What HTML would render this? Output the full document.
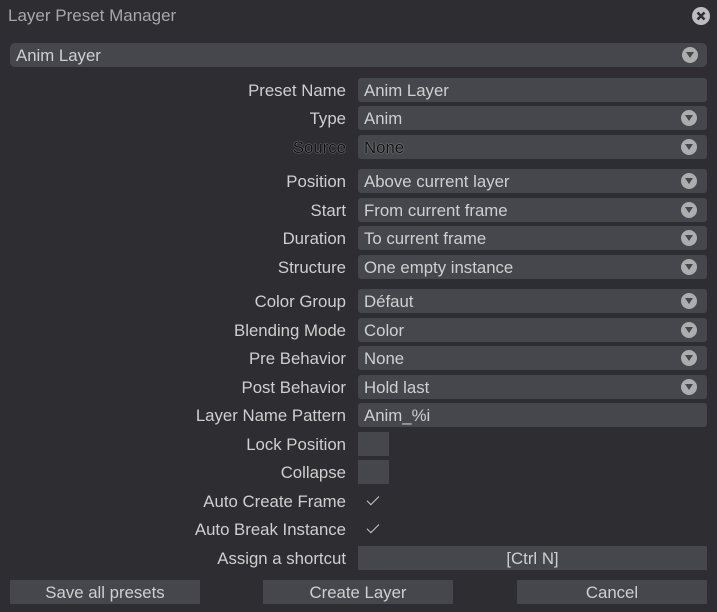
<!DOCTYPE html>
<html><head><meta charset="utf-8"><style>
body{margin:0;width:717px;height:612px;background:#2d2d32;font-family:"Liberation Sans",sans-serif;font-size:16.8px;color:#cfcfcf;position:relative;overflow:hidden}
.a{position:absolute}
.f{position:absolute;left:358px;width:349px;height:24px;background:#46474c;border-radius:3px;line-height:26px;padding-left:6px;box-sizing:border-box}
.l{position:absolute;right:371px;height:24px;line-height:26px;text-align:right;white-space:nowrap}
.dd{position:absolute;right:10px;top:4px;width:16px;height:16px;border-radius:50%;background:#adadaf}
.dd:after{content:"";position:absolute;left:3.5px;top:5px;border-left:4.5px solid transparent;border-right:4.5px solid transparent;border-top:6px solid #46474c}
.cb{position:absolute;left:358px;width:31px;height:24px;background:#46474c}
.ck{position:absolute;left:367px;width:11px;height:5px;border-left:1.6px solid #c8c8c8;border-bottom:1.6px solid #c8c8c8;transform:rotate(-45deg)}
.b{position:absolute;top:580px;height:24px;width:190px;background:#46474c;text-align:center;line-height:26px}
.dk{color:#0e0e10;text-shadow:0 0 1px #aaa,0 0 1px #aaa}
</style></head><body>
<div class="a" style="left:8px;top:6px;color:#a8a8aa;font-size:17px">Layer Preset Manager</div>
<div class="a" style="left:692px;top:7px;width:18px;height:18px;border-radius:50%;background:#bdbdbf">
<svg width="18" height="18" style="position:absolute;left:0;top:0"><path d="M5.5 5.5L12.5 12.5M12.5 5.5L5.5 12.5" stroke="#2d2d32" stroke-width="2.6"/></svg></div>
<div class="f" style="left:10px;width:697px;top:43px;border-radius:5px">Anim Layer<div class="dd" style="right:9px"></div></div>

<div class="l" style="top:78px">Preset Name</div><div class="f" style="top:78px">Anim Layer</div>
<div class="l" style="top:106px">Type</div><div class="f" style="top:106px">Anim<div class="dd"></div></div>
<div class="l dk" style="top:135px">Source</div><div class="f dk" style="top:135px">None<div class="dd"></div></div>
<div class="l" style="top:169px">Position</div><div class="f" style="top:169px">Above current layer<div class="dd"></div></div>
<div class="l" style="top:198px">Start</div><div class="f" style="top:198px">From current frame<div class="dd"></div></div>
<div class="l" style="top:226px">Duration</div><div class="f" style="top:226px">To current frame<div class="dd"></div></div>
<div class="l" style="top:255px">Structure</div><div class="f" style="top:255px">One empty instance<div class="dd"></div></div>
<div class="l" style="top:289px">Color Group</div><div class="f" style="top:289px">Défaut<div class="dd"></div></div>
<div class="l" style="top:318px">Blending Mode</div><div class="f" style="top:318px">Color<div class="dd"></div></div>
<div class="l" style="top:346px">Pre Behavior</div><div class="f" style="top:346px">None<div class="dd"></div></div>
<div class="l" style="top:375px">Post Behavior</div><div class="f" style="top:375px">Hold last<div class="dd"></div></div>
<div class="l" style="top:403px">Layer Name Pattern</div><div class="f" style="top:403px">Anim_%i</div>
<div class="l" style="top:432px">Lock Position</div><div class="cb" style="top:432px"></div>
<div class="l" style="top:460px">Collapse</div><div class="cb" style="top:460px"></div>
<div class="l" style="top:489px">Auto Create Frame</div><div class="ck" style="top:496px"></div>
<div class="l" style="top:517px">Auto Break Instance</div><div class="ck" style="top:524px"></div>
<div class="l" style="top:546px">Assign a shortcut</div><div class="f" style="top:546px;border-radius:0;text-align:center;padding:0">[Ctrl N]</div>

<div class="b" style="left:10px">Save all presets</div>
<div class="b" style="left:263px">Create Layer</div>
<div class="b" style="left:517px">Cancel</div>
</body></html>
